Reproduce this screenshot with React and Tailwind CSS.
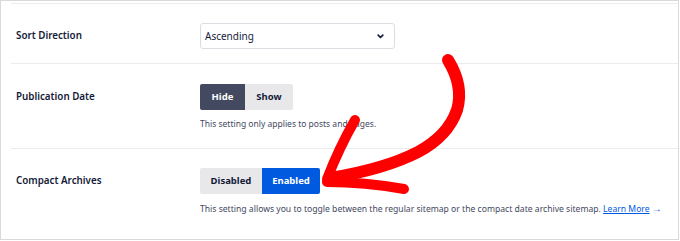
import React from "react";

function Chevron() {
  return (
    <svg width="7" height="5" viewBox="0 0 7 5" className="block">
      <path d="M1.2 1.2 L3.5 3.5 L5.8 1.2" fill="none" stroke="#141b38" strokeWidth="1.7" strokeLinecap="round" strokeLinejoin="round" />
    </svg>
  );
}

function Arrow() {
  return (
    <svg width="680" height="241" viewBox="0 0 680 241" className="absolute left-0 top-0 pointer-events-none">
      <g fill="none" stroke="#ff0000" strokeLinecap="round" strokeLinejoin="round">
        <path d="M448 60 Q464 86 457 110 Q448 136 418 152 Q385 169 330 178" strokeWidth="12" />
        <path d="M355 120 Q339 148 327 179" strokeWidth="10" />
        <path d="M327 182 Q365 182 404 189" strokeWidth="10" />
      </g>
    </svg>
  );
}

export default function App() {
  const font = { fontFamily: '"Noto Sans", "Open Sans", sans-serif' };
  return (
    <div className="relative w-[680px] h-[241px] bg-white overflow-hidden" style={font}>
      <div className="w-[679px] h-[240px] border border-[#d9d9d9] bg-white pl-[10px] pt-[2px]">
        {/* Row 1 */}
        <div className="grid grid-cols-[189px_1fr] border-t border-[#ececec] pt-[19px] pb-[14px]">
          <div className="pl-[5px] flex items-center h-[26px] text-[9.8px] font-semibold text-[#141b38]">Sort Direction</div>
          <div className="w-[195px] h-[26px] border border-[#dcdde3] rounded-[3px] flex items-center justify-between pl-[4px] pr-[10px] text-[10px] text-[#141b38]">
            <span>Ascending</span>
            <Chevron />
          </div>
        </div>
        {/* Row 2 */}
        <div className="grid grid-cols-[189px_1fr] border-t border-[#ececec] pt-[20px] pb-[18px]">
          <div className="pl-[5px] flex items-center h-[26px] text-[9.8px] font-semibold text-[#141b38]">Publication Date</div>
          <div>
            <div className="flex h-[26px]">
              <div className="w-[45px] bg-[#434960] text-white rounded-l-[2px] flex items-center justify-center text-[9.5px] font-bold">Hide</div>
              <div className="w-[48px] bg-[#e8e8eb] text-[#141b38] rounded-r-[2px] flex items-center justify-center text-[9.5px] font-bold">Show</div>
            </div>
            <div className="mt-[8px] text-[8.5px] text-[#434960] leading-[12px]">This setting only applies to posts and pages.</div>
          </div>
        </div>
        {/* Row 3 */}
        <div className="grid grid-cols-[189px_1fr] border-t border-[#ececec] pt-[19px]">
          <div className="pl-[5px] flex items-center h-[26px] text-[9.8px] font-semibold text-[#141b38]">Compact Archives</div>
          <div>
            <div className="flex h-[26px]">
              <div className="w-[62px] bg-[#e8e8eb] text-[#141b38] rounded-l-[2px] flex items-center justify-center text-[9.5px] font-bold">Disabled</div>
              <div className="w-[58px] bg-[#005ae0] text-white rounded-r-[2px] flex items-center justify-center text-[9.5px] font-bold">Enabled</div>
            </div>
            <div className="mt-[8px] text-[8.6px] text-[#434960] leading-[12px]">
              This setting allows you to toggle between the regular sitemap or the compact date archive sitemap.{" "}
              <span className="text-[#005ae0] underline">Learn More</span> <span className="text-[#005ae0] text-[10px]">→</span>
            </div>
          </div>
        </div>
      </div>
      <Arrow />
    </div>
  );
}
